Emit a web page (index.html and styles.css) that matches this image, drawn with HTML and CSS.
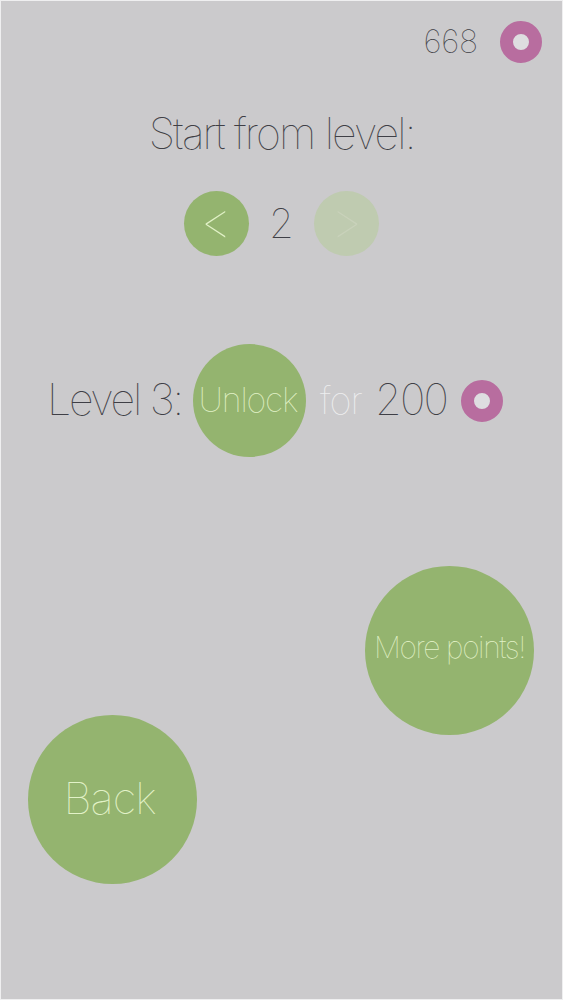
FILE: index.html
```html
<!DOCTYPE html>
<html lang="en">
<head>
<meta charset="utf-8">
<title>Start from level</title>
<link rel="stylesheet" href="styles.css">
</head>
<body>
<main class="screen">
  <header class="score">
    <span class="score-value">668</span>
    <span class="coin"></span>
  </header>
  <h1 class="title">Start from level:</h1>
  <div class="stepper">
    <button class="circle step">&lt;</button>
    <span class="step-value">2</span>
    <button class="circle step disabled">&gt;</button>
  </div>
  <div class="unlock-row">
    <span class="level-label">Level 3:</span>
    <button class="circle unlock">Unlock</button>
    <span class="for">for</span>
    <span class="price">200</span>
    <span class="coin"></span>
  </div>
  <div class="actions">
    <button class="circle big back">Back</button>
    <button class="circle big more">More points!</button>
  </div>
</main>
</body>
</html>
```
FILE: styles.css
```css
* { box-sizing: border-box; }
html, body { margin: 0; padding: 0; }
body { width: 563px; height: 1000px; overflow: hidden; background: #f2f2f2; }
.screen {
  width: 563px; height: 1000px;
  border: 1px solid #efeff0;
  background: #cbcacc;
  font-family: Inter, "Liberation Sans", sans-serif;
  font-weight: 100;
  color: #3f3f46;
  display: flex; flex-direction: column;
}
.circle {
  border: 0; padding: 0; margin: 0;
  border-radius: 50%;
  background: #94b46f;
  color: #e2f2c8;
  font: inherit;
  display: flex; align-items: center; justify-content: center;
  white-space: nowrap;
  flex: none;
}
.coin {
  width: 42px; height: 42px; flex: none;
  border-radius: 50%;
  border: 13.5px solid #b86d9f;
  background: #dedde0;
}
.score {
  display: flex; align-items: center; justify-content: flex-end;
  padding: 20px 20px 0 0;
  height: 62px;
}
.score-value { font-size: 32px; letter-spacing: -0.2px; line-height: 42px; margin-right: 22px; }
.title {
  margin: 44px 0 0; font: inherit; font-size: 43px; letter-spacing: -1.9px;
  line-height: 52px; text-align: center;
}
.stepper {
  display: flex; align-items: center;
  margin-top: 32px; padding-left: 183px;
}
.step { width: 65px; height: 65px; font-size: 50px; padding-bottom: 6px; }
.step.disabled { background: #bfcbb0; color: #c9d2bb; margin-left: 0; }
.step-value { width: 65px; text-align: center; font-size: 40px; line-height: 65px; }
.unlock-row {
  display: flex; align-items: center;
  margin-top: 88px; padding-left: 46px; height: 113px;
}
.level-label { width: 146px; padding-bottom: 4px; font-size: 43px; letter-spacing: -2.3px; white-space: nowrap; }
.unlock { width: 113px; height: 113px; padding: 0 3px 2px 0; font-size: 34px; letter-spacing: -1.2px; }
.for { margin-left: 14px; width: 55px; padding-bottom: 2px; font-size: 38px; letter-spacing: -1px; color: #eeeeef; }
.price { width: 86px; padding-bottom: 4px; font-size: 43px; letter-spacing: -1.8px; }
.actions {
  display: grid; grid-template-columns: auto auto; justify-content: space-between;
  margin-top: 109px; padding: 0 28px 0 27px; height: 318px;
}
.big { width: 169px; height: 169px; }
.back { align-self: end; padding: 0 6px 4px 0; font-size: 44px; letter-spacing: -1px; }
.more { align-self: start; padding: 0 0 7px 0; font-size: 30px; letter-spacing: -1.4px; }
```
